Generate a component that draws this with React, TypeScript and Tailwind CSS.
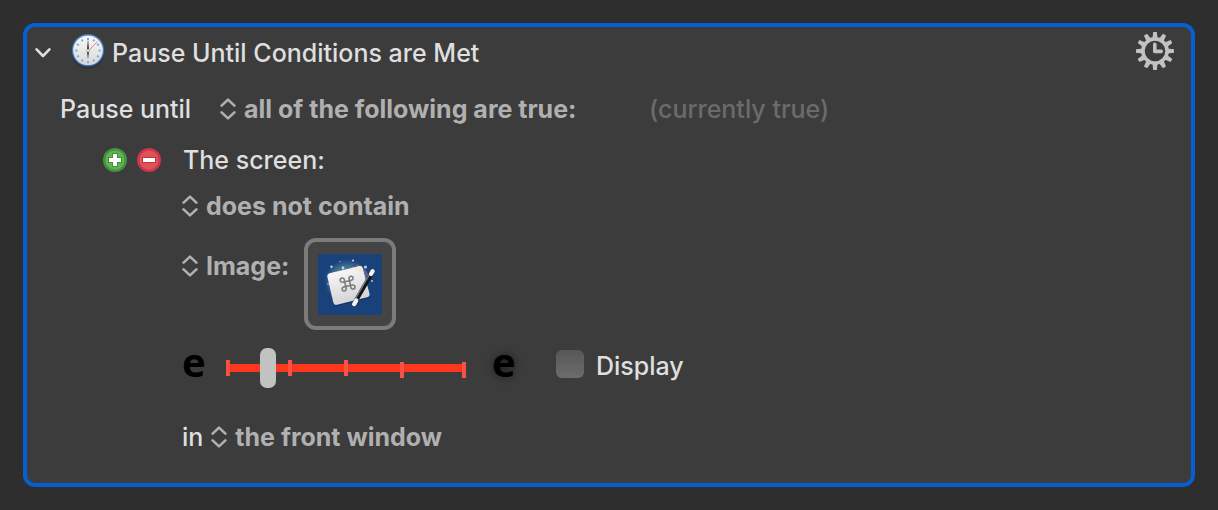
import { useState } from "react";

interface PopupProps {
  label: string;
  options: string[];
}

function UpDownIcon() {
  return (
    <svg viewBox="0 0 16 22" className="h-[22px] w-4 shrink-0" fill="none" stroke="#b0b0b0" strokeWidth="2.6" strokeLinecap="round" strokeLinejoin="round">
      <path d="M1.6 7.6 8 1.6l6.4 6" />
      <path d="M1.6 14.4 8 20.4l6.4-6" />
    </svg>
  );
}

function Popup({ label, options }: PopupProps) {
  return (
    <label className="flex items-center gap-2">
      <UpDownIcon />
      <select
        aria-label={label}
        className="appearance-none bg-transparent p-0 font-bold leading-8 text-[#b0b0b0] outline-none [field-sizing:content]"
      >
        {options.map((option) => (
          <option key={option}>{option}</option>
        ))}
      </select>
    </label>
  );
}

function ClockIcon() {
  return (
    <svg viewBox="0 0 34 36" className="h-9 w-[34px] shrink-0">
      <defs>
        <linearGradient id="clock-face" x1="0" y1="0" x2="0" y2="1">
          <stop offset="0" stopColor="#fafafa" />
          <stop offset="1" stopColor="#d6d6d6" />
        </linearGradient>
        <linearGradient id="clock-rim" x1="0" y1="0" x2="0" y2="1">
          <stop offset="0" stopColor="#5d93d8" />
          <stop offset="1" stopColor="#2b5c9f" />
        </linearGradient>
      </defs>
      <ellipse cx="17" cy="19" rx="16.4" ry="16.4" fill="#222" opacity=".5" />
      <circle cx="17" cy="17.5" r="16.2" fill="url(#clock-rim)" />
      <circle cx="17" cy="17.5" r="14.8" fill="url(#clock-face)" />
      {Array.from({ length: 12 }, (_, i) => (
        <rect key={i} x="16.1" y="4.8" width="1.8" height="2.2" fill="#7ba8e2" transform={`rotate(${i * 30} 17 17.5)`} />
      ))}
      <path d="M16 19.5 26.4 8.6" stroke="#f08070" strokeWidth="1" />
      <path d="M17 5.6 18 17.5h-2z" fill="#222" />
      <path d="M17 26.5 15.9 17.5h2.2z" fill="#333" />
      <circle cx="17" cy="17.5" r="1.5" fill="#eee" stroke="#888" strokeWidth=".5" />
    </svg>
  );
}

function GearClockIcon() {
  return (
    <svg viewBox="0 0 38 38" className="size-[38px]" fill="none" stroke="#c2c2c2">
      {Array.from({ length: 12 }, (_, i) => (
        <path key={i} d="M17.2 0h3.6l.8 7h-5.2z" fill="#c2c2c2" stroke="none" transform={`rotate(${i * 30} 19 19)`} />
      ))}
      <circle cx="19" cy="19" r="12.1" strokeWidth="3.6" />
      <path d="M18.8 12.4v7h6.4" strokeWidth="3.6" strokeLinecap="round" strokeLinejoin="round" />
    </svg>
  );
}

function WandPicture() {
  return (
    <svg viewBox="0 0 64 61" className="h-[61px] w-16">
      <defs>
        <linearGradient id="card" x1="0" y1="0" x2="0.3" y2="1">
          <stop offset="0" stopColor="#fdfdfd" />
          <stop offset="1" stopColor="#d4d4d8" />
        </linearGradient>
        <radialGradient id="glow">
          <stop offset="0" stopColor="#7fa8a0" stopOpacity=".9" />
          <stop offset=".7" stopColor="#5c8a9c" stopOpacity=".6" />
          <stop offset="1" stopColor="#4a6fa8" stopOpacity="0" />
        </radialGradient>
      </defs>
      <rect width="64" height="61" fill="#19427a" />
      <ellipse cx="29" cy="27" rx="23" ry="22" fill="url(#glow)" />
      <path d="M38 10c8 2 13 8 14 18l-8-4z" fill="#b98db0" opacity=".35" />
      <path d="M12.5 19 41 12.2q3-.7 3.7 2.3l6.8 25q.7 3-2.3 3.7L19 50.8q-3 .7-3.7-2.3L9.4 23q-.7-3.2 3.1-4z" fill="#0f2c55" opacity=".6" transform="translate(.5 1.2)" />
      <path d="M12.5 19 41 12.2q3-.7 3.7 2.3l6.8 25q.7 3-2.3 3.7L19 50.8q-3 .7-3.7-2.3L9.4 23q-.7-3.2 3.1-4z" fill="url(#card)" />
      <path d="M34 13.8 41 12.2q3-.7 3.7 2.3l2 8z" fill="#f3e9d2" opacity=".8" />
      <g transform="translate(29.6 29.6) rotate(-12) scale(.9)" fill="none" stroke="#7a7a7a" strokeWidth="1.7">
        <path d="M-2.7-2.7h5.4v5.4h-5.4z" />
        <path d="M-2.7-2.7H-5a2.3 2.3 0 1 1 2.3-2.3zM2.7-2.7V-5A2.3 2.3 0 1 1 5-2.7zM2.7 2.7H5A2.3 2.3 0 1 1 2.7 5zM-2.7 2.7V5A2.3 2.3 0 1 1-5 2.7z" />
      </g>
      <g strokeLinecap="round">
        <path d="M54.5 18 36.5 49" stroke="#16161c" strokeWidth="4.4" />
        <path d="M51.5 20.5 37.5 44.5" stroke="#8b8b95" strokeWidth="1.2" />
        <path d="M54.7 17.2 53 20" stroke="#f4f4f4" strokeWidth="4.2" />
        <path d="M38.2 46.5 36.2 50" stroke="#f4f4f4" strokeWidth="4.4" />
      </g>
      <g fill="#bcd4f5">
        <circle cx="13.5" cy="12.7" r="1.2" />
        <circle cx="35" cy="6.5" r="1.1" />
        <circle cx="25" cy="14" r="1.4" />
        <circle cx="47.5" cy="13" r="1.5" />
        <circle cx="54" cy="27" r=".9" />
        <circle cx="10" cy="30" r=".8" />
        <circle cx="22" cy="7.5" r=".6" />
      </g>
    </svg>
  );
}

function SensitivitySlider() {
  const [value, setValue] = useState(15);

  return (
    <div className="relative h-10 w-60">
      <svg viewBox="0 0 240 40" className="absolute inset-0 h-full w-full">
        <rect y="16" width="240" height="8" fill="#fb371e" />
        <g fill="#fb5046">
          <rect y="12" width="4" height="16" />
          <rect x="62" y="12" width="4" height="16" />
          <rect x="118" y="12" width="4" height="16" />
          <rect x="174" y="14" width="4" height="16" />
          <rect x="236" y="14" width="4" height="16" />
        </g>
      </svg>
      <input
        type="range"
        aria-label="Fuzziness"
        value={value}
        onChange={(event) => setValue(Number(event.target.value))}
        className="relative block h-10 w-full appearance-none bg-transparent [&::-webkit-slider-thumb]:h-10 [&::-webkit-slider-thumb]:w-4 [&::-webkit-slider-thumb]:appearance-none [&::-webkit-slider-thumb]:rounded-[7px] [&::-webkit-slider-thumb]:bg-[#c2c2c2]"
      />
    </div>
  );
}

export default function App() {
  const [expanded, setExpanded] = useState(true);

  return (
    <main className="min-h-screen bg-[#2e2e2e] p-[23px] font-[Inter,sans-serif] text-[25px] font-medium leading-8 text-[#dfdfdf]">
      <section className="rounded-xl border-4 border-[#0460d2] bg-[#3c3c3c] pt-[5px] pb-[30px]">
        <header className="flex items-center pr-[17px] pl-2">
          <button type="button" aria-label="Toggle action" aria-expanded={expanded} onClick={() => setExpanded(!expanded)} className="w-4 pt-1">
            <svg viewBox="0 0 16 10" className="h-[10px] w-4" fill="none" stroke="#dfdfdf" strokeWidth="2.6" strokeLinecap="round" strokeLinejoin="round">
              <path d="m1.6 1.4 6.4 6.6 6.4-6.6" />
            </svg>
          </button>
          <div className="ml-5">
            <ClockIcon />
          </div>
          <h1 className="ml-[7px] flex-1 pt-1">Pause Until Conditions are Met</h1>
          <button type="button" aria-label="Action options">
            <GearClockIcon />
          </button>
        </header>

        {expanded && (
          <div className="pt-[23px] pl-[33px]">
            <div className="flex items-center">
              <span className="w-40">Pause until</span>
              <div className="w-[429px]">
                <Popup label="Match" options={["all of the following are true:", "any of the following are true:"]} />
              </div>
              <span className="text-[#6b6b6b]">(currently true)</span>
            </div>

            <div className="mt-[19px] flex items-center pl-[43px]">
              <button type="button" aria-label="Add condition">
                <svg viewBox="0 0 24 24" className="size-6">
                  <circle cx="12" cy="12" r="12" fill="#3f9645" />
                  <circle cx="12" cy="12" r="9.6" fill="#67b04c" />
                  <path d="M9 5h6v4h4v6h-4v4H9v-4H5V9h4z" fill="#3a8f42" />
                  <path d="M10 6h4v4h4v4h-4v4h-4v-4H6v-4h4z" fill="#fff" />
                </svg>
              </button>
              <button type="button" aria-label="Remove condition" className="ml-[10px]">
                <svg viewBox="0 0 24 24" className="size-6">
                  <circle cx="12" cy="12" r="12" fill="#cf3550" />
                  <circle cx="12" cy="12" r="9.6" fill="#de5452" />
                  <path d="M5 9h14v6H5z" fill="#c42f4c" />
                  <path d="M6 10h12v4H6z" fill="#fff" />
                </svg>
              </button>
              <span className="ml-[22px]">The screen:</span>
            </div>

            <div className="pl-[122px]">
              <div className="mt-[14px]">
                <Popup label="Comparison" options={["does not contain", "contains"]} />
              </div>

              <div className="mt-4 flex items-start gap-[15px]">
                <div className="pt-3">
                  <Popup label="Image source" options={["Image:", "Clipboard:"]} />
                </div>
                <button
                  type="button"
                  aria-label="Choose image"
                  className="flex size-[92px] items-center justify-center rounded-xl border-4 border-[#7b7b7b] bg-[#444444]"
                >
                  <WandPicture />
                </button>
              </div>

              <div className="mt-[18px] flex items-start">
                <span className="w-11 font-['Open_Sans',sans-serif] text-[40px] font-bold leading-7 text-black">e</span>
                <SensitivitySlider />
                <span className="ml-[26px] w-16 font-['Open_Sans',sans-serif] text-[40px] font-bold leading-7 text-black [text-shadow:0_0_8px_#0008]">e</span>
                <label className="flex items-start gap-3 pt-0.5">
                  <input
                    type="checkbox"
                    className="size-7 appearance-none rounded-md bg-linear-to-b from-[#575757] to-[#6c6c6c] checked:from-[#0a6cff] checked:to-[#0460d2]"
                  />
                  Display
                </label>
              </div>

              <div className="mt-[33px] flex items-center gap-2">
                <span>in</span>
                <Popup label="Search area" options={["the front window", "all screens", "the main screen"]} />
              </div>
            </div>
          </div>
        )}
      </section>
    </main>
  );
}
